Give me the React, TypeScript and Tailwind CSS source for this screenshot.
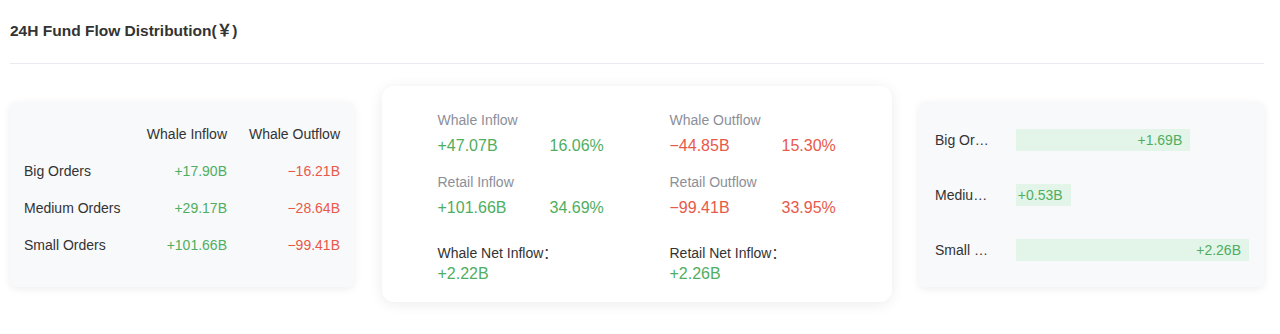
import React from 'react';

const GREEN = 'text-[#4fae5f]';
const RED = 'text-[#e8594a]';

const orderRows = [
    { label: 'Big Orders', inflow: '+17.90B', outflow: '−16.21B' },
    { label: 'Medium Orders', inflow: '+29.17B', outflow: '−28.64B' },
    { label: 'Small Orders', inflow: '+101.66B', outflow: '−99.41B' },
];

const netRows = [
    { label: 'Big Orders', value: 1.69 },
    { label: 'Medium Orders', value: 0.53 },
    { label: 'Small Orders', value: 2.26 },
];

const BAR_MAX = 233;

const OrdersTable: React.FC = () => (
    <div className="w-[344px] h-[185px] rounded-[6px] bg-[#f8f9fb] shadow-[0_2px_8px_rgba(0,0,0,0.07)] pl-[14px] pr-[14px] pt-[14px]">
        <div className="grid grid-cols-[1fr_100px_113px] text-[14px]">
            <div className="h-[37px]"></div>
            <div className="h-[37px] flex items-center justify-end text-[#333]">Whale Inflow</div>
            <div className="h-[37px] flex items-center justify-end text-[#333]">Whale Outflow</div>
            {orderRows.map(r => (
                <React.Fragment key={r.label}>
                    <div className="h-[37px] flex items-center text-[#333]">{r.label}</div>
                    <div className={`h-[37px] flex items-center justify-end ${GREEN}`}>{r.inflow}</div>
                    <div className={`h-[37px] flex items-center justify-end ${RED}`}>{r.outflow}</div>
                </React.Fragment>
            ))}
        </div>
    </div>
);

const FlowCell: React.FC<{ label: string; value: string; pct: string; positive: boolean }> = ({ label, value, pct, positive }) => (
    <div>
        <div className="h-[20px] leading-[20px] text-[14px] text-[#8c8f99]">{label}</div>
        <div className={`h-[32px] grid grid-cols-[112px_auto] items-center text-[16px] ${positive ? GREEN : RED}`}>
            <span>{value}</span>
            <span>{pct}</span>
        </div>
    </div>
);

const Summary: React.FC = () => (
    <div className="w-[510px] h-[216px] rounded-[12px] bg-white shadow-[0_2px_14px_rgba(0,0,0,0.08)] pl-[56px] pt-[24px]">
        <div className="grid grid-cols-[232px_232px]">
            <FlowCell label="Whale Inflow" value="+47.07B" pct="16.06%" positive />
            <FlowCell label="Whale Outflow" value="−44.85B" pct="15.30%" positive={false} />
        </div>
        <div className="grid grid-cols-[232px_232px] mt-[10px]">
            <FlowCell label="Retail Inflow" value="+101.66B" pct="34.69%" positive />
            <FlowCell label="Retail Outflow" value="−99.41B" pct="33.95%" positive={false} />
        </div>
        <div className="grid grid-cols-[232px_232px] mt-[19px]">
            <div>
                <div className="h-[20px] leading-[20px] text-[14px] text-[#333]">Whale Net Inflow：</div>
                <div className={`h-[22px] leading-[22px] text-[16px] ${GREEN}`}>+2.22B</div>
            </div>
            <div>
                <div className="h-[20px] leading-[20px] text-[14px] text-[#333]">Retail Net Inflow：</div>
                <div className={`h-[22px] leading-[22px] text-[16px] ${GREEN}`}>+2.26B</div>
            </div>
        </div>
    </div>
);

const NetBars: React.FC = () => {
    const max = Math.max(...netRows.map(r => r.value));
    return (
        <div className="w-[345px] h-[185px] rounded-[6px] bg-[#f8f9fb] shadow-[0_2px_8px_rgba(0,0,0,0.07)] pl-[16px] pr-[15px] pt-[11px]">
            {netRows.map(r => (
                <div key={r.label} className="h-[55px] flex items-center text-[14px]">
                    <div className="w-[57px] truncate text-[#333]">{r.label}</div>
                    <div className="ml-[24px] flex-1">
                        <div
                            className={`h-[22px] min-w-max bg-[#e3f4e8] flex items-center justify-end pl-[1px] pr-[8px] whitespace-nowrap ${GREEN}`}
                            style={{ width: (r.value / max) * BAR_MAX }}
                        >
                            +{r.value.toFixed(2)}B
                        </div>
                    </div>
                </div>
            ))}
        </div>
    );
};

const App: React.FC = () => {
    return (
        <div className="w-[1280px] h-[334px] bg-white pl-[10px] pr-[16px] pt-[20px] font-['Liberation_Sans','Noto_Sans_CJK_SC',sans-serif]">
            <h2 className="h-[22px] leading-[22px] text-[15.5px] font-semibold text-[#333]">24H Fund Flow Distribution(￥)</h2>
            <div className="mt-[21px] h-px bg-[#e9e9ef]"></div>
            <div className="mt-[22px] flex items-center justify-between">
                <OrdersTable />
                <Summary />
                <NetBars />
            </div>
        </div>
    );
};

export default App;
